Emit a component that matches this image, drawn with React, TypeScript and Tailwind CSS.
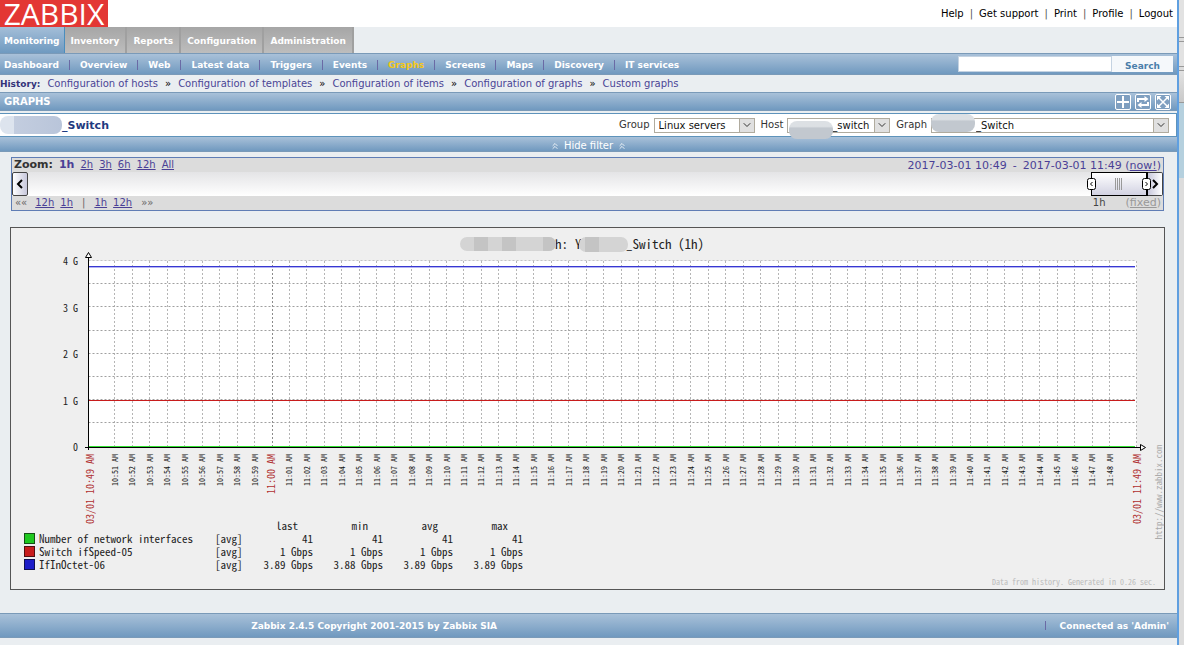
import { Fragment, ReactNode } from 'react'
import { ChevronDown, ChevronsUp } from 'lucide-react'

const BAR = 'bg-gradient-to-b from-[#a9c1d9] to-[#7099bf] border-[#7a9ab8]'
// half-width latin glyphs, same look as the server side renderer
const MONO = "font-['Noto_Sans_CJK_SC','Liberation_Mono',monospace] [font-feature-settings:'hwid']"

const TABS = ['Monitoring', 'Inventory', 'Reports', 'Configuration', 'Administration']
const PAGES = ['Dashboard', 'Overview', 'Web', 'Latest data', 'Triggers', 'Events', 'Graphs', 'Screens', 'Maps', 'Discovery', 'IT services']
const HISTORY = ['Configuration of hosts', 'Configuration of templates', 'Configuration of items', 'Configuration of graphs', 'Custom graphs']
const LINKS = ['Help', 'Get support', 'Print', 'Profile', 'Logout']

const SERIES = [
  { name: 'Number of network interfaces', color: 'bg-[#1fc81f] border-[#145014]', values: ['41', '41', '41', '41'] },
  { name: 'Switch ifSpeed-05', color: 'bg-[#c81c1c] border-[#501010]', values: ['1 Gbps', '1 Gbps', '1 Gbps', '1 Gbps'] },
  { name: 'IfInOctet-06', color: 'bg-[#1c1cc8] border-[#101050]', values: ['3.89 Gbps', '3.88 Gbps', '3.89 Gbps', '3.89 Gbps'] },
]

function Header() {
  return (
    <header className="flex h-[27px] items-start justify-between bg-white">
      <a href="#" className="flex h-[27px] w-[108px] items-center justify-center bg-[#e33734] font-['Open_Sans',sans-serif] text-[30px] leading-[27px] text-white">ZABBIX</a>
      <nav className="flex gap-[6px] pt-[7px] pr-1 leading-[14px] text-black">
        {LINKS.map((l, i) => (
          <Fragment key={l}>
            {i > 0 && <span className="text-[#555]">|</span>}
            <a href="#">{l}</a>
          </Fragment>
        ))}
      </nav>
    </header>
  )
}

function MainMenu() {
  return (
    <nav className="flex h-[26px] text-[9px] font-bold text-white">
      {TABS.map((t, i) => (
        <a
          key={t}
          href="#"
          className={`flex items-center pt-[2px] ${i === 0 ? 'border-r border-[#4a8dbd] bg-gradient-to-b from-[#a4bed8] to-[#6f9ac0] px-1' : 'border-r-2 border-[#a0a0a0] bg-gradient-to-b from-[#a6a6a6] to-[#bdbdbd] px-[6px]'}`}
        >
          {t}
        </a>
      ))}
    </nav>
  )
}

function SubMenu() {
  return (
    <div className={`flex h-[22px] items-center justify-between border-y pr-1 text-[9px] font-bold ${BAR}`}>
      <nav className="flex pt-px pl-1 text-white">
        {PAGES.map((p, i) => (
          <Fragment key={p}>
            {i > 0 && <span className="mx-[10px] my-[2px] w-px bg-[#6a6aa5]" />}
            <a href="#" className={p === 'Graphs' ? 'text-[#f5c818]' : ''}>{p}</a>
          </Fragment>
        ))}
      </nav>
      <form className="flex h-4">
        <input aria-label="Search" className="w-[154px] border border-[#c5d3e2] bg-white px-1" />
        <button type="button" className="w-[61px] bg-[#f5f8fb] pt-[3px] text-[#4a7eaa]">Search</button>
      </form>
    </div>
  )
}

function History() {
  return (
    <nav className="flex h-[17px] items-center text-[#4a4596]">
      <b className="mr-[7px] text-[9px] text-[#33337a]">History:</b>
      {HISTORY.map((h, i) => (
        <Fragment key={h}>
          {i > 0 && <span className="mx-[7px] text-black">»</span>}
          <a href="#">{h}</a>
        </Fragment>
      ))}
    </nav>
  )
}

function ToolButton({ label, children }: { label: string; children: ReactNode }) {
  return (
    <button aria-label={label} className="size-4 rounded-[2px] border border-white bg-[#7f9fc0]">
      <svg viewBox="0 0 14 14" className="size-full fill-none stroke-white stroke-2">{children}</svg>
    </button>
  )
}

function TitleBar() {
  return (
    <div className={`flex h-[19px] items-center justify-between border-y pr-[6px] pl-1 ${BAR}`}>
      <h1 className="pt-px text-[10px] font-bold text-white">GRAPHS</h1>
      <div className="flex gap-1">
        <ToolButton label="Add to favourites"><path d="M7 1v12M1 7h12" /></ToolButton>
        <ToolButton label="Reset">
          <path d="M2 7V4h7M12 7v3H5" />
          <path d="M8.5 1l4 3-4 3zM5.5 7l-4 3 4 3z" className="fill-white stroke-none" />
        </ToolButton>
        <ToolButton label="Fullscreen">
          <path d="M3 3l8 8M11 3l-8 8" strokeWidth="1.5" />
          <path d="M1 1h4.5L1 5.5zM13 1v4.5L8.500 1zM13 13H8.500L13 8.500zM1 13V8.500L5.500 13z" className="fill-white stroke-none" />
        </ToolButton>
      </div>
    </div>
  )
}

function Picker({ label, value, width, mask }: { label: string; value: string; width: string; mask?: string }) {
  return (
    <label className="flex items-center gap-1 text-[#333]">
      {label}
      <span className={`relative flex h-[15px] ${width}`}>
        <select className={`w-full appearance-none border border-[#b0ab9e] bg-white text-[#111] ${mask ? 'pl-[44px]' : 'pl-1'}`}>
          <option>{value}</option>
        </select>
        <span className="pointer-events-none absolute inset-y-0 right-0 flex w-4 items-center justify-center border border-[#b0ab9e] bg-[#e0e0e0]">
          <ChevronDown size={12} color="#333" />
        </span>
        {mask && <span className={`pointer-events-none absolute h-[18px] w-[44px] rounded-[8px] bg-gradient-to-b from-[#dce0e4] from-30% to-[#c2c8cf] to-40% ${mask}`} />}
      </span>
    </label>
  )
}

function PickerRow() {
  return (
    <div className="mt-[2px] flex h-[24px] items-center justify-between border-y border-r border-[#5e93bb] bg-white pr-[7px]">
      <h2 className="flex items-center text-[11px] font-bold text-[#1f3a80]">
        <span className="h-[18px] w-[62px] rounded-[8px] bg-gradient-to-r from-[#dde4ee] from-22% via-[#c3cddf] via-23% to-[#b9c5da]" />
        <span className="pt-[2px]">_Switch</span>
      </h2>
      <div className="flex gap-[6px]">
        <Picker label="Group" value="Linux servers" width="w-[101px]" />
        <Picker label="Host" value="_switch" width="w-[103px]" mask="left-[2px] top-[3px]" />
        <Picker label="Graph" value="_Switch" width="w-[238px]" mask="left-0 -top-[4px]" />
      </div>
    </div>
  )
}

function TimeBar() {
  return (
    <section className="mt-[5px] mr-[13px] ml-[11px] border border-[#5f7db5] bg-[#dcdcdc]">
      <div className="flex h-[14px] items-center justify-between pr-[2px] pl-[2px] text-[#4a3f96]">
        <div className="flex items-center gap-[6px]">
          <b className="text-[11px] text-[#333]">Zoom:</b>
          <b className="text-[11px]">1h</b>
          {['2h', '3h', '6h', '12h', 'All'].map(z => <a key={z} href="#" className="underline">{z}</a>)}
        </div>
        <div className="flex gap-[6px] pt-px text-[11px]">
          <a href="#">2017-03-01 10:49</a>
          <span>-</span>
          <a href="#">2017-03-01 11:49 (<span className="underline">now!</span>)</a>
        </div>
      </div>
      <div className="flex h-6 justify-between bg-gradient-to-b from-[#e4e4e6] to-white">
        <button aria-label="Back" className="w-4 rounded-[2px] border border-[#444] bg-gradient-to-r from-white to-[#c8c8dc]">
          <svg viewBox="0 0 14 22" className="size-full fill-none stroke-black stroke-2"><path d="M9 7l-4 4 4 4" /></svg>
        </button>
        <div className="flex">
          <div className="relative flex w-[57px] items-center justify-center border border-r-2 border-black bg-gradient-to-b from-white to-[#d2d2e2]">
            <svg viewBox="0 0 8 12" className="h-3 w-2 stroke-[#999]"><path d="M.5 0v12M2.5 0v12M4.5 0v12M6.5 0v12" /></svg>
            <svg viewBox="0 0 9 12" className="absolute -left-[5px] h-3 w-[9px] fill-white stroke-black"><rect x=".5" y=".5" width="8" height="11" rx="2" /><path d="M5.5 4l-2 2 2 2" /></svg>
            <svg viewBox="0 0 9 12" className="absolute -right-[5px] h-3 w-[9px] fill-white stroke-black"><rect x=".5" y=".5" width="8" height="11" rx="2" /><path d="M3.500 4l2 2-2 2" /></svg>
          </div>
          <button aria-label="Forward" className="w-[15px] rounded-r-[2px] border border-l-0 border-[#444] bg-gradient-to-r from-[#c8c8dc] to-white">
            <svg viewBox="0 0 14 22" className="size-full fill-none stroke-black stroke-2"><path d="M5 7l4 4-4 4" /></svg>
          </button>
        </div>
      </div>
      <div className="flex h-[14px] items-center justify-between pr-[2px] pl-[3px] text-[#4a3f96]">
        <div className="flex gap-[6px]">
          <span className="mr-[2px] text-[#666]">««</span>
          <a href="#" className="underline">12h</a>
          <a href="#" className="underline">1h</a>
          <span className="mx-[3px] text-[#666]">|</span>
          <a href="#" className="underline">1h</a>
          <a href="#" className="underline">12h</a>
          <span className="ml-[3px] text-[#666]">»»</span>
        </div>
        <div className="flex gap-5 text-[#444]">
          <span>1h</span>
          <span className="text-[11px] text-[#999]">(<a href="#" className="underline">fixed</a>)</span>
        </div>
      </div>
    </section>
  )
}

// Plot coordinates inside the chart frame
const LEFT = 77.5
const RIGHT = 1125.5
const STEP = 17.45

function minuteLabel(m: number) {
  const total = 10 * 60 + 49 + m
  return `${Math.floor(total / 60)}:${String(total % 60).padStart(2, '0')} AM`
}

function VLabel({ x, y, children, className }: { x: number; y: number; children: string; className: string }) {
  return <text transform={`translate(${x} ${y}) rotate(-90)`} className={className}>{children}</text>
}

function Plot() {
  const minutes = Array.from({ length: 58 }, (_, i) => i + 2)
  return (
    <svg viewBox="0 0 1153 291" className={`block w-full overflow-visible ${MONO}`}>
      <rect x={LEFT} y="33" width={RIGHT - LEFT} height="186" fill="#fff" />
      <g stroke="#b5b5b5" strokeDasharray="2 2">
        {minutes.map(m => {
          const x = Math.round(LEFT + 8.5 + (m - 1) * STEP) + 0.5
          return <path key={m} d={`M${x} 33V219`} stroke={m === 11 ? '#8c8c8c' : undefined} />
        })}
        {[0, 1, 2, 3, 4, 5, 6, 7].map(i => <path key={i} d={`M${LEFT} ${Math.round(33 + i * 23.2) - 0.5}H${RIGHT}`} stroke={i === 0 ? '#c4c4c4' : '#a0a0a0'} />)}
        <path d={`M${RIGHT} 33V219`} />
      </g>
      <path d={`M${LEFT} 38.5H1124`} stroke="#3838d0" />
      <path d={`M${LEFT} 39.5H1124`} stroke="#b4b4f4" />
      <path d={`M${LEFT} 172.5H1124`} stroke="#c81c1c" />
      <path d={`M${LEFT} 218.5H1124`} stroke="#30e030" />
      <path d="M77.5 29V222M74 219.5H1129" stroke="#000" />
      <path d="M77.5 24.5l-3 5h6zM1134.5 219.5l-5-3v6z" fill="#fff" stroke="#000" />

      <g className="fill-[#222] text-[10px]" textAnchor="end">
        {['4 G', '3 G', '2 G', '1 G', '0'].map((t, i) => <text key={t} x="67" y={Math.round(37 + i * 46.5)}>{t}</text>)}
      </g>
      <g textAnchor="end">
        {minutes.map(m => (
          <VLabel key={m} x={Math.round(LEFT + 12 + (m - 1) * STEP)} y={226} className={m === 11 ? 'fill-[#b03030] text-[10px]' : 'fill-[#111] text-[8px]'}>
            {minuteLabel(m)}
          </VLabel>
        ))}
        <VLabel x={83} y={226} className="fill-[#b03030] text-[10px]">03/01 10:49 AM</VLabel>
        <VLabel x={1130} y={226} className="fill-[#b03030] text-[10px]">03/01 11:49 AM</VLabel>
        <VLabel x={1151} y={217} className="fill-[#aaa] text-[9px]">http://www.zabbix.com</VLabel>
      </g>

      <g className="fill-[#222] text-[13px]">
        <text x="544" y="21">h:</text>
        <text x="564" y="21">Y</text>
        <text x="615" y="21">_Switch (1h)</text>
      </g>
      {/* masked host name */}
      <clipPath id="mask-name"><rect x="449" y="9" width="96" height="14" rx="7" /><rect x="568" y="9" width="49" height="15" rx="7" /></clipPath>
      <g clipPath="url(#mask-name)">
        <rect x="449" y="9" width="168" height="15" fill="#d4d4d4" />
        <path d="M463 9h14v15h-14zM491 9h14v15h-14zM532 9h13v15h-13zM574 9h14v15h-14z" fill="#c4c4c4" />
      </g>
    </svg>
  )
}

function Legend() {
  return (
    <table className={`ml-[13px] text-[11px] leading-[13px] text-[#222] ${MONO}`}>
      <thead>
        <tr>
          <th className="w-[191px]" />
          <th className="w-[28px]" />
          {['last', 'min', 'avg', 'max'].map(h => <th key={h} className="w-[70px] pr-[15px] text-right font-normal">{h}</th>)}
        </tr>
      </thead>
      <tbody>
        {SERIES.map(s => (
          <tr key={s.name}>
            <td className="p-0">
              <span className="flex items-center gap-1 whitespace-pre"><i className={`size-[11px] border ${s.color}`} />{s.name}</span>
            </td>
            <td className="p-0">[avg]</td>
            {s.values.map((v, i) => <td key={i} className="p-0 text-right">{v}</td>)}
          </tr>
        ))}
      </tbody>
    </table>
  )
}

export default function App() {
  return (
    <div className="flex min-h-screen bg-[#eaeef1] font-['DejaVu_Sans',Verdana,sans-serif] text-[10px] leading-[14px]">
      <main className="min-w-0 flex-1">
        <Header />
        <MainMenu />
        <SubMenu />
        <History />
        <TitleBar />
        <PickerRow />
        <button className={`flex h-[15px] w-full items-center justify-center gap-1 border-b pt-[3px] text-white ${BAR}`}>
          <ChevronsUp size={10} /> Hide filter <ChevronsUp size={10} />
        </button>
        <TimeBar />
        <section className="mt-4 mr-[12px] ml-[10px] border border-[#555] bg-[#efefef]">
          <Plot />
          <Legend />
          <p className={`mt-1 pr-2 text-right text-[8px] leading-[14px] text-[#bbb] ${MONO}`}>Data from history. Generated in 0.26 sec.</p>
        </section>
        <footer className={`mt-[23px] flex h-[25px] items-center justify-between border-y pr-2 text-[9px] font-bold text-white ${BAR}`}>
          <span className="w-[64%] text-center">Zabbix 2.4.5 Copyright 2001-2015 by Zabbix SIA</span>
          <span className="flex items-center gap-[14px]">
            <i className="h-[9px] w-px bg-[#6a6aa5]" />
            Connected as 'Admin'
          </span>
        </footer>
      </main>
      <aside className="flex w-[7px] flex-col border-l-2 border-[#5f9fe0] bg-[#dcdcdc]">
        <div className="h-[37px] bg-[#e2e2e2]" />
        <div className="h-[5px] border-y border-[#999]" />
        <div className="h-6 bg-[#e2e2e2]" />
        <div className="h-[5px] border-y border-[#999]" />
        <div className="h-8 border-b border-[#999] bg-gradient-to-b from-[#e2e2e2] to-[#c9c9c9]" />
        <div className="h-[75px] bg-[#b5d0de]" />
      </aside>
    </div>
  )
}
